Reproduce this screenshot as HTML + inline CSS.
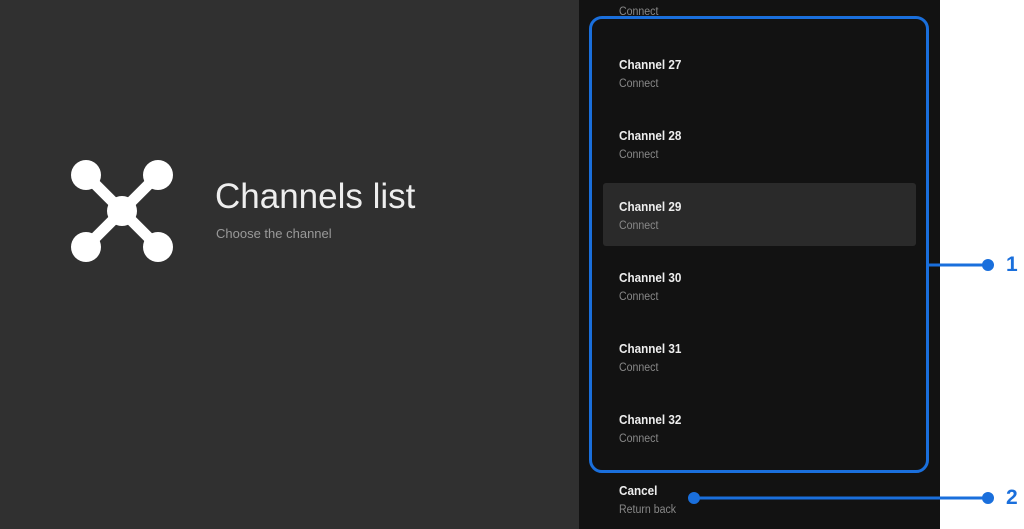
<!DOCTYPE html>
<html><head><style>
*{margin:0;padding:0;box-sizing:border-box}
body{width:1024px;height:529px;overflow:hidden;background:#fff;font-family:"Liberation Sans",sans-serif;position:relative}
.left{position:absolute;left:0;top:0;width:579px;height:529px;background:#303030}
.right{position:absolute;left:579px;top:0;width:361px;height:529px;background:#121212}
.t{position:absolute;left:619px;color:#eee;font-size:13px;font-weight:bold;transform:scaleX(.9);transform-origin:left}
.s{position:absolute;left:619px;color:#888;font-size:11.5px;transform:scaleX(.92);transform-origin:left}
.hl{position:absolute;left:603px;top:183px;width:313px;height:63px;background:#2a2a2a;border-radius:3px}
.box{position:absolute;left:589px;top:16px;width:340px;height:457px;border:3px solid #1a6fdc;border-radius:13px}
.num{position:absolute;color:#1a6fdc;font-weight:bold;font-size:21px}
</style></head><body>
<div class="left"></div>
<div class="right"></div>
<svg style="position:absolute;left:0;top:0" width="579" height="529">
<g stroke="#fff" stroke-width="11"><line x1="86" y1="175" x2="158" y2="247"/><line x1="158" y1="175" x2="86" y2="247"/></g>
<g fill="#fff"><circle cx="86" cy="175" r="15"/><circle cx="158" cy="175" r="15"/><circle cx="86" cy="247" r="15"/><circle cx="158" cy="247" r="15"/><circle cx="122" cy="211" r="15"/></g>
</svg>
<div style="position:absolute;left:215px;top:177px;color:#eee;font-size:35px;font-weight:300">Channels list</div>
<div style="position:absolute;left:216px;top:226px;color:#999;font-size:13px">Choose the channel</div>
<div class="hl"></div>
<div class="s" style="top:6px">Connect</div>
<div class="t" style="top:57px">Channel 27</div><div class="s" style="top:78px">Connect</div>
<div class="t" style="top:128px">Channel 28</div><div class="s" style="top:149px">Connect</div>
<div class="t" style="top:199px">Channel 29</div><div class="s" style="top:220px">Connect</div>
<div class="t" style="top:270px">Channel 30</div><div class="s" style="top:291px">Connect</div>
<div class="t" style="top:341px">Channel 31</div><div class="s" style="top:362px">Connect</div>
<div class="t" style="top:412px">Channel 32</div><div class="s" style="top:433px">Connect</div>
<div class="t" style="top:483px">Cancel</div><div class="s" style="top:504px">Return back</div>
<div class="box"></div>
<svg style="position:absolute;left:0;top:0" width="1024" height="529">
<g stroke="#1a6fdc" stroke-width="3" fill="#1a6fdc"><line x1="929" y1="265" x2="988" y2="265"/><circle cx="988" cy="265" r="4.5"/>
<line x1="694" y1="498" x2="988" y2="498"/><circle cx="694" cy="498" r="4.5"/><circle cx="988" cy="498" r="4.5"/></g>
</svg>
<div class="num" style="left:1006px;top:253px">1</div>
<div class="num" style="left:1006px;top:486px">2</div>
</body></html>
